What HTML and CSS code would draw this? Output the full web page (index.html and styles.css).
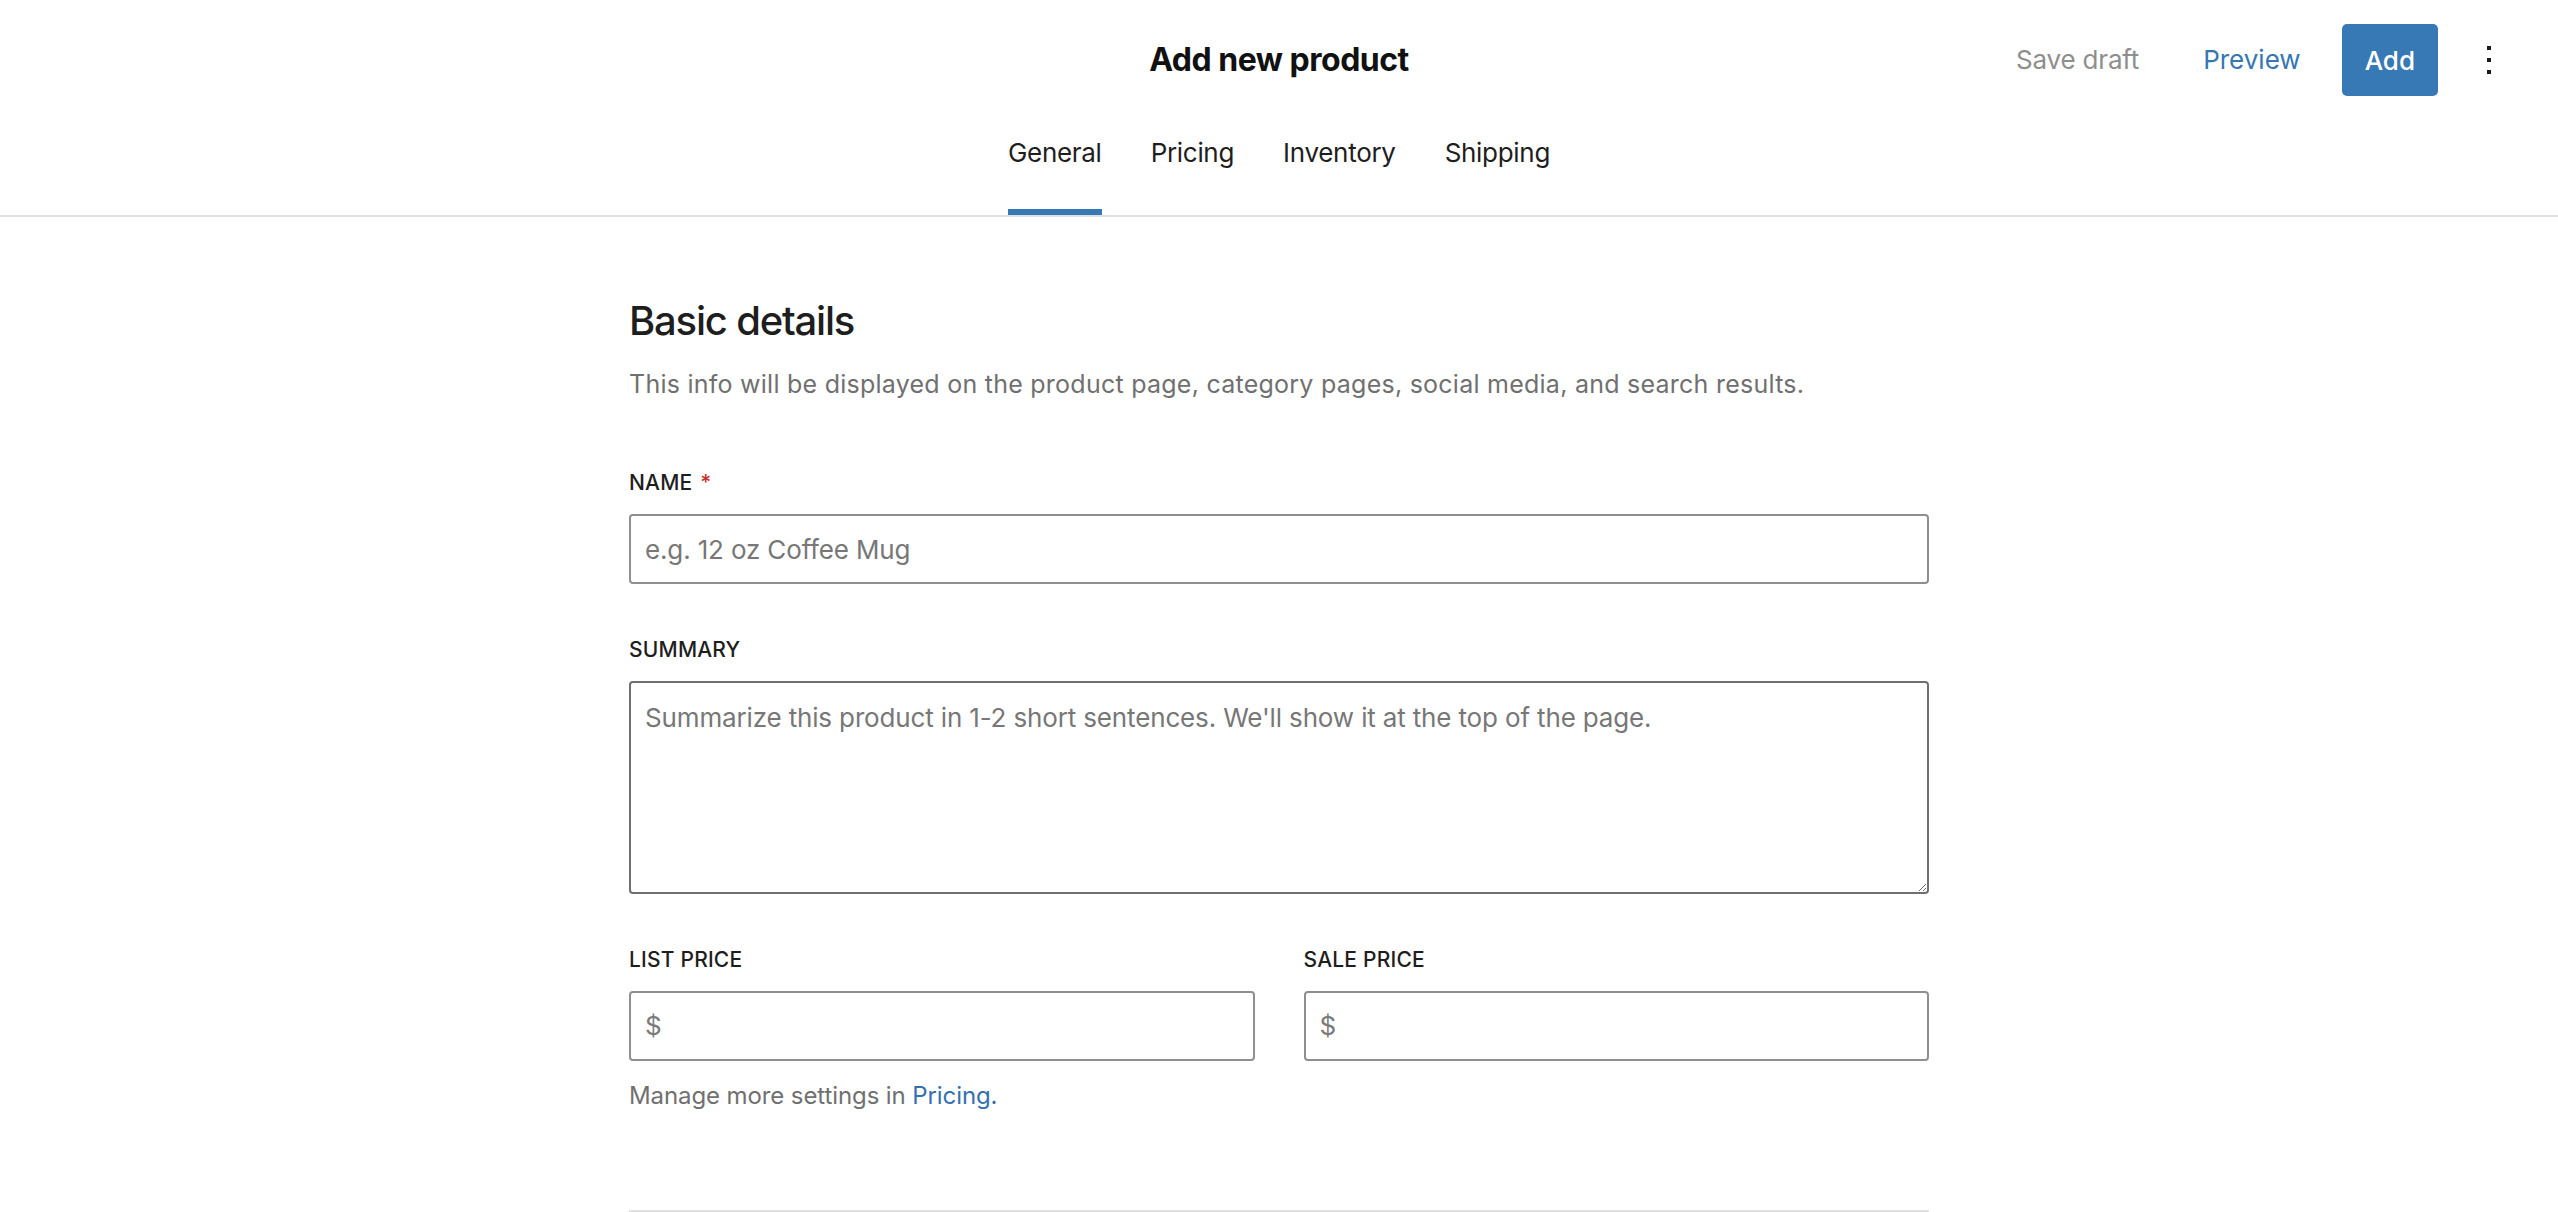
FILE: index.html
```html
<!DOCTYPE html>
<html lang="en">
<head>
<meta charset="utf-8">
<title>Add new product</title>
<link rel="stylesheet" href="styles.css">
</head>
<body>
<header class="topbar">
  <div class="topbar-row">
    <div class="spacer"></div>
    <h1 class="title">Add new product</h1>
    <div class="actions">
      <button class="link-btn muted" type="button">Save draft</button>
      <button class="link-btn accent" type="button">Preview</button>
      <button class="btn-primary" type="button">Add</button>
      <button class="kebab" type="button" aria-label="More actions"><span></span><span></span><span></span></button>
    </div>
  </div>
  <nav class="tabs">
    <a class="tab active" href="#">General</a>
    <a class="tab" href="#">Pricing</a>
    <a class="tab" href="#">Inventory</a>
    <a class="tab" href="#">Shipping</a>
  </nav>
</header>

<main class="form">
  <h2 class="section-title">Basic details</h2>
  <p class="section-desc">This info will be displayed on the product page, category pages, social media, and search results.</p>

  <div class="field first">
    <label class="field-label" for="name">NAME <span class="req">*</span></label>
    <input class="text-input" id="name" type="text" placeholder="e.g. 12 oz Coffee Mug">
  </div>

  <div class="field">
    <label class="field-label" for="summary">SUMMARY</label>
    <textarea class="text-area" id="summary" placeholder="Summarize this product in 1-2 short sentences. We'll show it at the top of the page."></textarea>
  </div>

  <div class="field price-row">
    <div class="price-col">
      <label class="field-label" for="list">LIST PRICE</label>
      <div class="price-input"><span class="currency">$</span><input id="list" type="text"></div>
    </div>
    <div class="price-col">
      <label class="field-label" for="sale">SALE PRICE</label>
      <div class="price-input"><span class="currency">$</span><input id="sale" type="text"></div>
    </div>
  </div>

  <p class="help">Manage more settings in <a href="#">Pricing.</a></p>

  <hr class="divider">
</main>
</body>
</html>
```

FILE: styles.css
```css
* {
  box-sizing: border-box;
}

html, body {
  margin: 0;
  padding: 0;
  background: #ffffff;
}

body {
  font-family: Inter, "Noto Sans", "Liberation Sans", sans-serif;
  color: #1e1e1e;
}

/* ---------- Header ---------- */
.topbar {
  border-bottom: 2px solid #e0e0e0;
}

.topbar-row {
  display: grid;
  grid-template-columns: 1fr auto 1fr;
  align-items: center;
  height: 72px;
  margin-top: 24px;
}

.title {
  margin: 0;
  font-size: 32px;
  line-height: 40px;
  font-weight: 700;
  color: #111111;
  letter-spacing: -0.5px;
}

.actions {
  display: flex;
  align-items: center;
  justify-content: flex-end;
  padding-right: 67px;
}

.link-btn {
  border: 0;
  background: none;
  padding: 0;
  font-family: inherit;
  font-size: 26px;
  line-height: 36px;
  font-weight: 400;
  cursor: pointer;
}

.link-btn.muted {
  color: #8e8e8e;
  letter-spacing: -0.2px;
}

.link-btn.accent {
  color: #3576b3;
  margin-left: 64px;
}

.btn-primary {
  margin-left: 41px;
  height: 72px;
  padding: 0 23px;
  border: 0;
  border-radius: 5px;
  background: #3779b5;
  color: #ffffff;
  font-family: inherit;
  font-size: 26px;
  font-weight: 500;
  cursor: pointer;
}

.kebab {
  margin-left: 49px;
  display: flex;
  flex-direction: column;
  gap: 8px;
  width: 4px;
  padding: 0;
  border: 0;
  background: none;
  cursor: pointer;
}

.kebab span {
  display: block;
  width: 4px;
  height: 4px;
  background: #1a1a1a;
}

.tabs {
  display: flex;
  justify-content: center;
  gap: 49px;
}

.tab {
  display: block;
  padding-top: 39px;
  padding-bottom: 38px;
  border-bottom: 6px solid transparent;
  font-size: 26px;
  line-height: 36px;
  letter-spacing: -0.3px;
  color: #1e1e1e;
  text-decoration: none;
}

.tab.active {
  border-bottom-color: #3779b5;
}

/* ---------- Form ---------- */
.form {
  width: 1300px;
  margin: 0 auto;
  padding-top: 80px;
}

.section-title {
  margin: 0;
  font-size: 40px;
  line-height: 48px;
  font-weight: 500;
  color: #1e1e1e;
  letter-spacing: -1.2px;
}

.section-desc {
  margin: 21px 0 0;
  font-size: 25px;
  line-height: 36px;
  letter-spacing: 0.25px;
  color: #707070;
}

.field {
  margin-top: 52px;
}

.field.first {
  margin-top: 67px;
}

.field-label {
  display: block;
  margin-bottom: 17px;
  font-size: 21px;
  line-height: 28px;
  font-weight: 500;
  letter-spacing: 0.2px;
  color: #1e1e1e;
}

.req {
  color: #c9302c;
  margin-left: 2px;
}

.text-input,
.text-area,
.price-input {
  display: block;
  width: 100%;
  border: 2px solid #8f8f8f;
  border-radius: 4px;
  background: #ffffff;
  font-family: inherit;
  font-size: 26px;
  letter-spacing: -0.15px;
  color: #1e1e1e;
}

.text-input {
  height: 70px;
  padding: 0 14px;
  line-height: 36px;
}

.text-area {
  height: 213px;
  padding: 17px 14px;
  line-height: 36px;
  resize: vertical;
  border-color: #6f6f6f;
}

.text-input::placeholder,
.text-area::placeholder {
  color: #777777;
  opacity: 1;
}

.price-row {
  display: grid;
  grid-template-columns: 1fr 1fr;
  gap: 49px;
}

.price-input {
  display: flex;
  align-items: center;
  height: 70px;
  padding: 0 14px;
}

.currency {
  color: #7a7a7a;
  font-size: 26px;
  line-height: 36px;
  margin-right: 6px;
}

.price-input input {
  flex: 1;
  min-width: 0;
  border: 0;
  outline: none;
  padding: 0;
  font-family: inherit;
  font-size: 26px;
  background: transparent;
}

.help {
  margin: 18px 0 0;
  font-size: 24px;
  line-height: 34px;
  letter-spacing: -0.1px;
  color: #707070;
}

.help a {
  color: #3570b0;
  text-decoration: none;
}

.divider {
  margin: 97px 0 0;
  border: 0;
  border-top: 2px solid #e0e0e0;
}
```
